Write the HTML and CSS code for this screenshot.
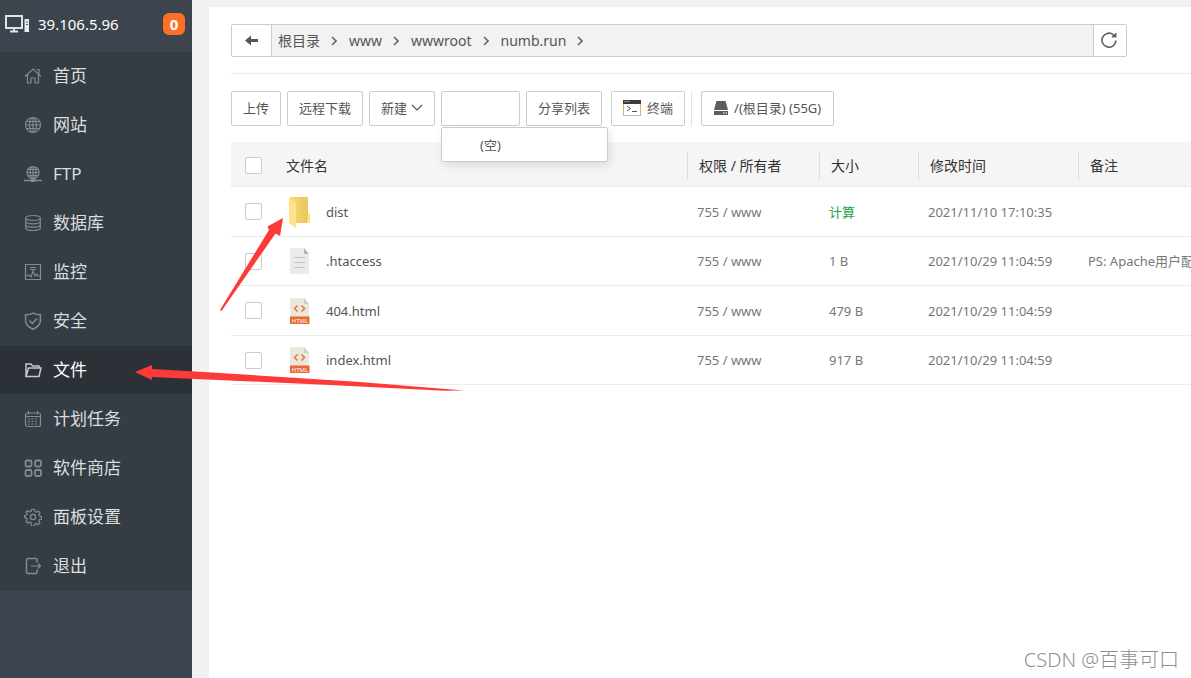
FILE: index.html
```html
<!DOCTYPE html>
<html lang="zh-CN">
<head>
<meta charset="utf-8">
<title>文件</title>
<link rel="stylesheet" href="styles.css">
</head>
<body>
<div class="app">
  <aside class="sidebar">
    <header class="server">
      <svg class="server-icon" width="26" height="20" viewBox="0 0 26 20" fill="none" stroke="#dfe2e4"><rect x="2" y="2" width="16" height="12" stroke-width="2"/><path d="M10 14v3M6 17.500h8" stroke-width="2"/><path d="M20.500 5h4.500v13h-4.500z" fill="#e8eaeb" stroke="none"/><path d="M22 8h2M22 10.500h2" stroke="#59616a"/></svg>
      <span class="server-ip">39.106.5.96</span>
      <span class="badge">0</span>
    </header>
    <nav class="menu">
      <a class="menu-item" href="#"><svg class="icon" viewBox="0 0 18 18"><path d="M1 9.500 9 2l8 7.500M3.500 8v8h3.500v-5h4v5h3.500V8M12.500 2.500h2.500v4"/></svg>首页</a>
      <a class="menu-item" href="#"><svg class="icon" viewBox="0 0 18 18"><circle cx="9" cy="9" r="7.500"/><ellipse cx="9" cy="9" rx="3.500" ry="7.500"/><path d="M9 1.500v15M1.500 9h15M2.500 5.500h13M2.500 12.500h13"/></svg>网站</a>
      <a class="menu-item" href="#"><svg class="icon" viewBox="0 0 18 18"><circle cx="9" cy="7.500" r="6"/><ellipse cx="9" cy="7.500" rx="2.800" ry="6"/><path d="M9 1.500v14M3 7.500h12M4 4.500h10M4 10.500h10"/><path d="M0 15.500h18" stroke-width="1.500"/><path d="M7 15.500h4" stroke-width="3"/></svg>FTP</a>
      <a class="menu-item" href="#"><svg class="icon" viewBox="0 0 18 18"><ellipse cx="9" cy="4" rx="7.300" ry="2.500"/><path d="M1.700 4v10c0 3.300 14.600 3.300 14.600 0V4M1.700 7.300c0 3.300 14.600 3.300 14.600 0M1.700 10.700c0 3.300 14.600 3.300 14.600 0"/></svg>数据库</a>
      <a class="menu-item" href="#"><svg class="icon" viewBox="0 0 18 18"><path d="M1.500 1.500h15v15h-15zM6 4.500h6M6 6.500h6M2 13l3-1 2 2 2-6 2 5 2-2 1 2h2"/></svg>监控</a>
      <a class="menu-item" href="#"><svg class="icon" viewBox="0 0 18 18"><path d="M9 1.200c2.500 1.300 4.500 1.600 7.400 1.600v6c0 4-3.400 6.700-7.400 8.400-4-1.700-7.400-4.400-7.400-8.400v-6C4.500 2.800 6.500 2.500 9 1.200zM5.500 8.500 8.300 11.500l4.700-5" stroke-width="1.500"/></svg>安全</a>
      <a class="menu-item active" href="#"><svg class="icon" viewBox="0 0 18 18"><path d="M2 15.500V3h5l1.500 2H15v2M2 15.500 4.500 7H17l-2 8.500z" stroke-width="1.500"/></svg>文件</a>
      <a class="menu-item" href="#"><svg class="icon" viewBox="0 0 18 18"><rect x="1.500" y="3" width="15" height="13.500" rx="2"/><path d="M1.500 6.500h15M4.500 1v3.500M13.500 1v3.500"/><path d="M4 9h10M4 11.500h10M4 14h10" stroke-dasharray="2 1.500"/></svg>计划任务</a>
      <a class="menu-item" href="#"><svg class="icon" viewBox="0 0 18 18"><g stroke-width="1.800"><rect x="1.500" y="1.500" width="6" height="6" rx="1.500"/><rect x="11" y="1.500" width="6" height="6" rx="1.500"/><rect x="1.500" y="11" width="6" height="6" rx="1.500"/><rect x="11" y="11" width="6" height="6" rx="1.500"/></g></svg>软件商店</a>
      <a class="menu-item" href="#"><svg class="icon" viewBox="0 0 18 18"><circle cx="9" cy="9" r="2.600"/><path d="M7.500 1.500h3l.5 2.200 1.300.5 2-1.200 1.800 1.900-1.200 1.900.5 1.200 2.100.5v2.500l-2.100.6-.6 1.400 1.200 1.900-1.800 1.800-2-1.200-1.200.5-.5 2h-3L7 14.500l-1.300-.5-1.900 1.200L2 13.400l1.200-1.900-.6-1.400-2-.6V7.500l2-.5.6-1.200L2 4l1.800-1.300 2 1.200L7 3.500z"/></svg>面板设置</a>
      <a class="menu-item" href="#"><svg class="icon" viewBox="0 0 18 18"><path d="M13 5.500v-3l-1-1H3.500l-1 1v13l1 1H12l1-1v-3" stroke-width="1.500"/><path d="M7 9h9.500M14 6.500 16.500 9 14 11.500"/></svg>退出</a>
    </nav>
  </aside>

  <main class="panel">
    <div class="path-bar">
      <button class="path-back" type="button" aria-label="后退"><svg width="14" height="12" viewBox="0 0 14 12"><path d="M0 5.500 6 .500V4h7v3H6v3.500z" fill="#555"/></svg></button>
      <nav class="crumbs">
        <a href="#">根目录</a><svg class="chevron" viewBox="0 0 6 10"><path d="M1 1l4 4-4 4"/></svg>
        <a href="#">www</a><svg class="chevron" viewBox="0 0 6 10"><path d="M1 1l4 4-4 4"/></svg>
        <a href="#">wwwroot</a><svg class="chevron" viewBox="0 0 6 10"><path d="M1 1l4 4-4 4"/></svg>
        <a href="#">numb.run</a><svg class="chevron" viewBox="0 0 6 10"><path d="M1 1l4 4-4 4"/></svg>
      </nav>
      <button class="path-refresh" type="button" aria-label="刷新"><svg width="18" height="18" viewBox="0 0 18 18"><path d="M12.500 2.800A7 7 0 1 0 15 8.500" fill="none" stroke="#666" stroke-width="1.700"/><path d="M15.500 .500v5h-5L12 3z" fill="#666"/></svg></button>
    </div>

    <div class="toolbar">
      <div class="tool-group">
        <button class="btn" type="button">上传</button>
        <button class="btn" type="button">远程下载</button>
        <button class="btn" type="button">新建<svg width="12" height="8" viewBox="0 0 12 8" fill="none" stroke="#555" stroke-width="1.200"><path d="M1 1 6 6l5-5"/></svg></button>
        <div class="dropdown">
          <button class="btn btn-favorites" type="button" aria-label="收藏夹"></button>
          <div class="dropdown-menu">(空)</div>
        </div>
        <button class="btn" type="button">分享列表</button>
      </div>
      <div class="tool-group split">
        <button class="btn" type="button"><svg width="18" height="16" viewBox="0 0 18 16"><path d="M.5 3v12.500h17V3" fill="#fff" stroke="#e5ad69"/><path d="M0 15.500h18" stroke="#bbb"/><path d="M0 0h18v4H0z" fill="#3c3c3c"/><path d="M1.500 1.500h5" stroke="#ddd" stroke-dasharray="1 1"/><path d="M4 6l3.500 2.500L4 11M9 11.500h5" fill="none" stroke="#555"/></svg>终端</button>
      </div>
      <button class="btn btn-disk" type="button"><svg width="14" height="14" viewBox="0 0 14 14" fill="#5c5c5c"><path d="M2.500 0h9L14 9H0zM0 10h14v4H0z"/><path d="M9 12h1.500M11.500 12H13" stroke="#fff"/></svg>/(根目录) (55G)</button>
    </div>

    <div class="table-wrap">
      <table class="files">
        <colgroup><col class="col-check"><col><col class="col-perm"><col class="col-size"><col class="col-time"><col class="col-note"></colgroup>
        <thead>
          <tr>
            <th><input type="checkbox" aria-label="全选"></th>
            <th>文件名</th>
            <th><span class="sep">权限 / 所有者</span></th>
            <th><span class="sep">大小</span></th>
            <th><span class="sep">修改时间</span></th>
            <th><span class="sep">备注</span></th>
          </tr>
        </thead>
        <tbody>
          <tr>
            <td><input type="checkbox" aria-label="dist"></td>
            <td><a class="file" href="#"><svg width="22" height="32" viewBox="0 0 22 32"><defs><linearGradient id="fold"><stop offset="0" stop-color="#f8d978"/><stop offset="1" stop-color="#eac456"/></linearGradient></defs><path d="M1 1h18v16l2 1v9H5z" fill="url(#fold)"/><path d="M0 2l7 4v26l-7-5z" fill="#ffe28b"/><path d="M19 17l2 1v9h-3z" fill="#ffe083"/></svg>dist</a></td>
            <td>755 / www</td><td><a class="calc" href="#">计算</a></td><td>2021/11/10 17:10:35</td><td></td>
          </tr>
          <tr>
            <td><input type="checkbox" aria-label=".htaccess"></td>
            <td><a class="file" href="#"><svg width="22" height="28" viewBox="0 0 22 28"><path d="M1 1h14l5 6v20H1z" fill="#ebebeb"/><path d="M15 1l5 6h-5z" fill="#b5b5b5"/><path d="M5 10.500h11M5 15.500h11M5 20.500h11" stroke="#c4c4c4"/></svg>.htaccess</a></td>
            <td>755 / www</td><td>1 B</td><td>2021/10/29 11:04:59</td><td>PS: Apache用户配置</td>
          </tr>
          <tr>
            <td><input type="checkbox" aria-label="404.html"></td>
            <td><a class="file" href="#"><svg width="22" height="28" viewBox="0 0 22 28"><path d="M1 1h14l5 6v13H1z" fill="#e8e8dd"/><path d="M15 1l5 6h-5z" fill="#cfcfbf"/><path d="M8.500 8.500l-3 3 3 3M12.500 8.500l3 3-3 3" fill="none" stroke="#eb6a38" stroke-width="1.400"/><path d="M1 19.500h19.500V27H1z" fill="#eb6631"/><text class="tag" x="11" y="25.500">HTML</text></svg>404.html</a></td>
            <td>755 / www</td><td>479 B</td><td>2021/10/29 11:04:59</td><td></td>
          </tr>
          <tr>
            <td><input type="checkbox" aria-label="index.html"></td>
            <td><a class="file" href="#"><svg width="22" height="28" viewBox="0 0 22 28"><path d="M1 1h14l5 6v13H1z" fill="#e8e8dd"/><path d="M15 1l5 6h-5z" fill="#cfcfbf"/><path d="M8.500 8.500l-3 3 3 3M12.500 8.500l3 3-3 3" fill="none" stroke="#eb6a38" stroke-width="1.400"/><path d="M1 19.500h19.500V27H1z" fill="#eb6631"/><text class="tag" x="11" y="25.500">HTML</text></svg>index.html</a></td>
            <td>755 / www</td><td>917 B</td><td>2021/10/29 11:04:59</td><td></td>
          </tr>
        </tbody>
      </table>
    </div>
  </main>

  <svg class="arrows" width="480" height="400" viewBox="0 0 480 400" fill="#fc3a38" aria-hidden="true">
    <path d="M283 218 280 236 275.500 233.500 221.500 311 220 310 269 230 267.500 226.500z"/>
    <path d="M135 372 152 365v4l60 3.500L360 382l104 8.500-20 .2L330 385l-178-8v3z"/>
  </svg>
  <div class="watermark">CSDN @百事可口</div>
</div>
</body>
</html>
```
FILE: styles.css
```css
* { box-sizing: border-box; }

body {
  margin: 0;
  background: #f1f1f1;
  color: #555;
  font: 13px/20px "Noto Sans", "Noto Sans CJK SC", sans-serif;
}

a { color: inherit; text-decoration: none; }
button { font: inherit; color: inherit; cursor: pointer; }
svg { flex: none; }

.app {
  position: relative;
  display: flex;
  min-height: 100vh;
  overflow: hidden;
}

/* Sidebar */
.sidebar {
  flex: none;
  width: 192px;
  background: #3c444d;
}

.server {
  display: flex;
  align-items: center;
  gap: 8px;
  height: 52px;
  padding: 0 7px 4px 4px;
  color: #fff;
  font-size: 15px;
}

.badge {
  margin-left: auto;
  width: 22px;
  border-radius: 6px;
  background: #ff6f28;
  font-weight: 700;
  line-height: 22px;
  text-align: center;
}

.menu {
  display: flow-root;
  background: #353d44;
}

.menu-item {
  display: flex;
  align-items: center;
  gap: 11px;
  height: 48px;
  margin-bottom: 1px;
  padding-left: 24px;
  color: #dcdddf;
  font-size: 17px;
}

.menu-item.active { background: #2c3138; color: #fff; }

.icon {
  width: 18px;
  height: 18px;
  fill: none;
  stroke: #858a8e;
  stroke-width: 1.2;
}

.active .icon { stroke: #c5c7c9; }

/* Main panel */
.panel {
  flex: 1;
  min-width: 0;
  margin: 7px 0 0 17px;
  padding: 17px 0 0 22px;
  background: #fff;
}

.path-bar {
  display: flex;
  height: 33px;
  margin-right: 64px;
  border: 1px solid #ccc;
  border-radius: 2px;
  background: #f2f2f2;
}

.path-back,
.path-refresh {
  display: flex;
  align-items: center;
  justify-content: center;
  padding: 0;
  border: 0;
  background: #fff;
}

.path-back { width: 40px; border-right: 1px solid #ccc; }
.path-refresh { width: 33px; border-left: 1px solid #ccc; }

.crumbs {
  display: flex;
  flex: 1;
  align-items: center;
  padding-left: 6px;
  font-size: 14px;
}

.chevron {
  width: 6px;
  height: 10px;
  margin: 0 12px 0 11px;
  fill: none;
  stroke: #666;
  stroke-width: 1.6;
}

.toolbar {
  display: flex;
  gap: 9px;
  margin-top: 16px;
  padding: 17px 0 16px;
  border-top: 1px solid #ececec;
}

.tool-group { display: flex; gap: 6px; }
.split { padding-right: 6px; border-right: 1px solid #e2e2e2; }

.btn {
  display: flex;
  align-items: center;
  gap: 4px;
  height: 35px;
  padding: 0 11px 2px;
  border: 1px solid #ccc;
  border-radius: 2px;
  background: #fff;
  white-space: nowrap;
}

.split .btn { gap: 6px; }
.btn-disk { gap: 6px; padding: 0 12px 2px; }
.btn-favorites { width: 79px; }

.dropdown { position: relative; }

.dropdown-menu {
  position: absolute;
  top: 36px;
  left: 0;
  width: 167px;
  padding: 7px 38px 6px;
  border: 1px solid #ccc;
  border-radius: 2px;
  background: #fff;
  box-shadow: 2px 4px 8px rgba(0, 0, 0, 0.1);
}

/* File table */
.table-wrap { overflow: hidden; }

.files {
  width: 100%;
  table-layout: fixed;
  border-collapse: separate;
  border-spacing: 0;
}

.col-check { width: 46px; }
.col-perm { width: 132px; }
.col-size { width: 99px; }
.col-time { width: 160px; }
.col-note { width: 113px; }

th, td {
  overflow: hidden;
  padding: 0 0 0 10px;
  border-bottom: 1px solid #ececec;
  text-align: left;
  white-space: nowrap;
}

th {
  height: 45px;
  padding: 3px 0 0;
  background: #f5f5f5;
  color: #333;
  font-size: 14px;
  font-weight: 400;
}

th:nth-child(2) { padding-left: 9px; }
td { height: 50px; color: #777; }
tr:nth-child(even) td { height: 49px; }
th:first-child, td:first-child { padding-left: 14px; }

.sep {
  display: block;
  padding-left: 11px;
  border-left: 1px solid #ddd;
  line-height: 28px;
}

input[type="checkbox"] {
  display: block;
  width: 17px;
  height: 17px;
  margin: 0;
  border: 1px solid #ccc;
  border-radius: 2px;
  appearance: none;
  background: #fff;
}

.file {
  display: flex;
  align-items: center;
  gap: 15px;
  padding-left: 2px;
  color: #555;
}

.calc { color: #20a53a; }

.tag {
  fill: #fff;
  font-size: 6px;
  text-anchor: middle;
}

/* Overlays */
.arrows {
  position: absolute;
  top: 0;
  left: 0;
  pointer-events: none;
}

.watermark {
  position: absolute;
  right: 12px;
  bottom: 6px;
  color: #8f8f8f;
  font-size: 20px;
  font-weight: 300;
  line-height: 24px;
}
```
